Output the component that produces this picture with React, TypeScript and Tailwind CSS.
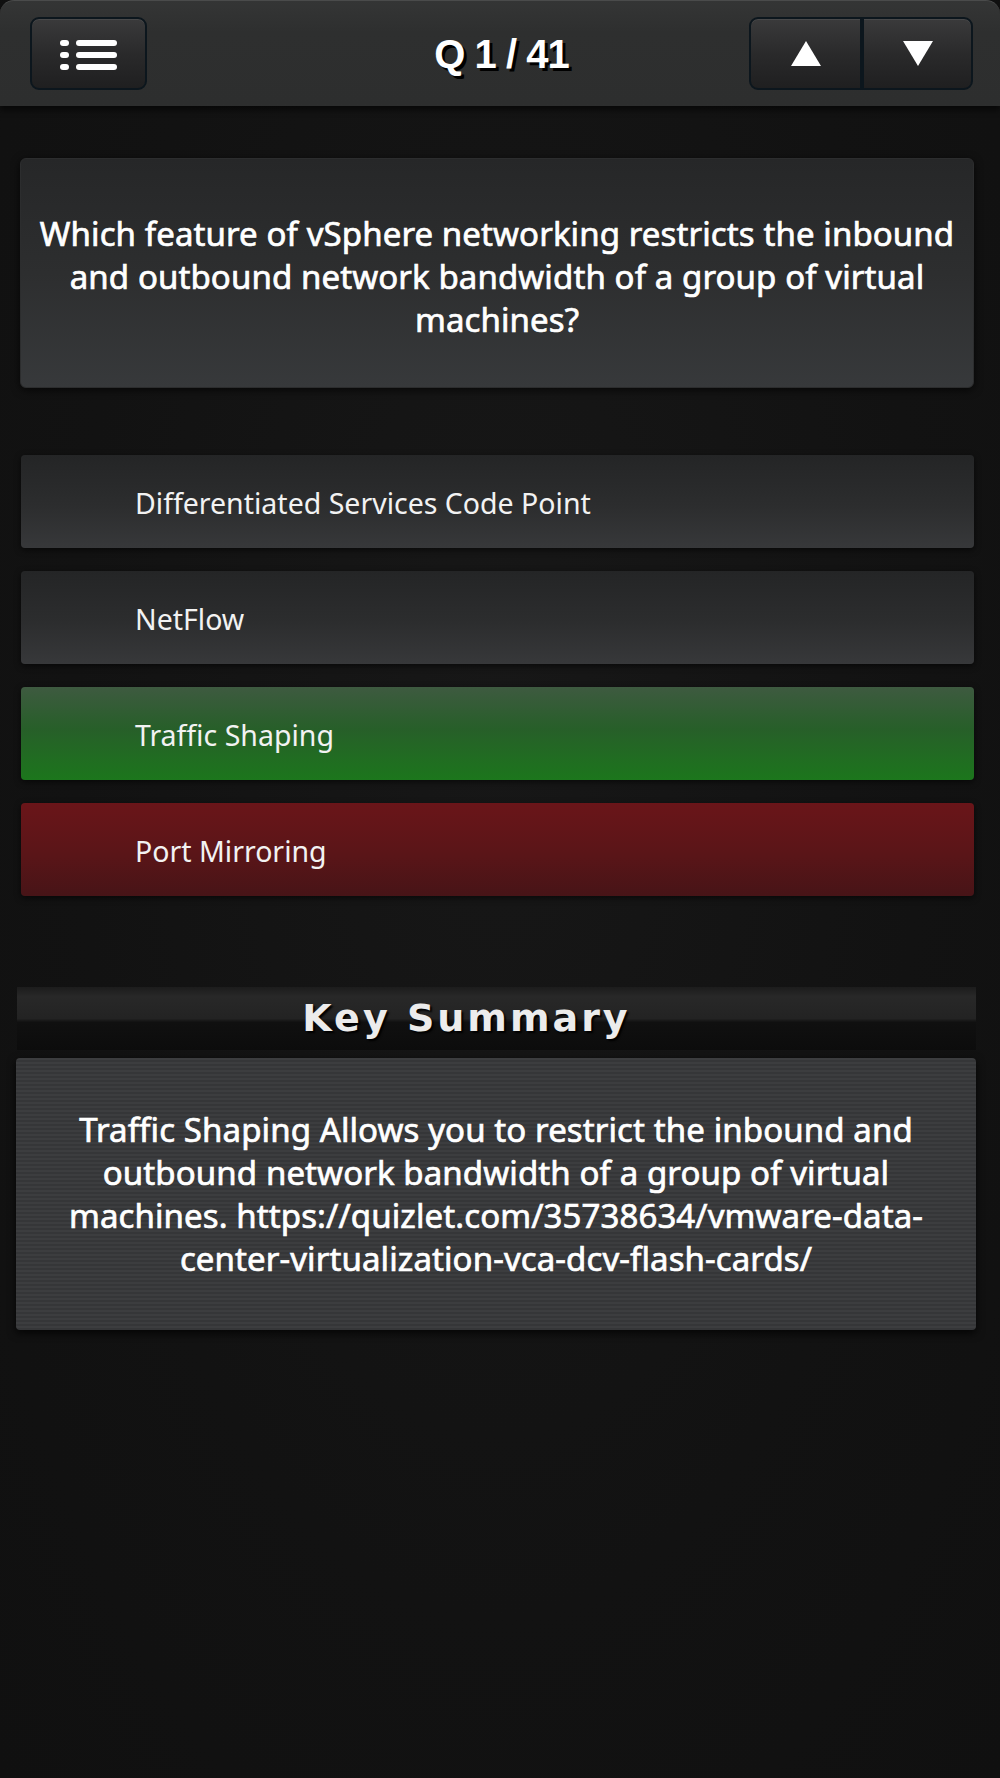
import React from "react";

const options = [
  { label: "Differentiated Services Code Point", state: "idle" },
  { label: "NetFlow", state: "idle" },
  { label: "Traffic Shaping", state: "correct" },
  { label: "Port Mirroring", state: "wrong" },
];

const optionBg: Record<string, string> = {
  idle: "bg-[linear-gradient(180deg,#242526_0%,#2c2d2e_55%,#37383a_100%)]",
  correct: "bg-[linear-gradient(180deg,#3e5a40_0%,#275f29_45%,#1c761c_100%)]",
  wrong: "bg-[linear-gradient(180deg,#6a1519_0%,#5a1518_55%,#471417_100%)]",
};

function NavButton({ dir, className }: { dir: "up" | "down"; className: string }) {
  return (
    <button
      className={`flex h-[73px] items-center justify-center border-2 border-[#0c161d] bg-[linear-gradient(180deg,#3a3a3b_0%,#2a2a2b_50%,#1f1f20_100%)] shadow-[inset_0_1px_0_rgba(255,255,255,0.08)] ${className}`}
    >
      <svg width="32" height="27" viewBox="0 0 32 27">
        {dir === "up" ? (
          <polygon points="16,1 31,26 1,26" fill="#fff" />
        ) : (
          <polygon points="1,1 31,1 16,26" fill="#fff" />
        )}
      </svg>
    </button>
  );
}

export default function App() {
  return (
    <div className="min-h-[1778px] w-full bg-[radial-gradient(ellipse_at_50%_40%,#171717_0%,#121212_60%,#101010_100%)] font-['Noto_Sans',sans-serif]">
      <header className="grid h-[106px] grid-cols-3 items-center rounded-t-[14px] border-t border-[#4a4b4b] bg-[linear-gradient(180deg,#343535_0%,#2e2f2f_30%,#2d2e2e_100%)] pl-[30px] pr-[27px] shadow-[0_4px_6px_rgba(0,0,0,0.6)]">
        <button className="flex h-[73px] w-[117px] flex-col items-center justify-center gap-[6px] rounded-[9px] border-2 border-[#0c161d] bg-[linear-gradient(180deg,#3a3a3b_0%,#2a2a2b_50%,#1f1f20_100%)] pt-[3px] shadow-[inset_0_1px_0_rgba(255,255,255,0.08)]">
          {[0, 1, 2].map((i) => (
            <span key={i} className="flex items-center gap-[7px]">
              <span className="h-[6px] w-[9px] rounded-full bg-white" />
              <span className="h-[6px] w-[41px] rounded-full bg-white" />
            </span>
          ))}
        </button>
        <div className="text-center font-['Liberation_Sans',sans-serif] text-[40px] font-bold tracking-[-1px] text-white [text-shadow:3px_3px_0_#000]">
          Q 1 / 41
        </div>
        <div className="flex justify-end">
          <NavButton dir="up" className="w-[113px] rounded-l-[9px]" />
          <NavButton dir="down" className="w-[111px] rounded-r-[9px]" />
        </div>
      </header>

      <main className="pl-[20px] pr-[26px]">
        <section className="mt-[52px] flex h-[230px] items-center justify-center rounded-[6px] border border-[#2c2d2e] bg-[linear-gradient(180deg,#262728_0%,#2d2e2f_50%,#37393b_100%)] px-[14px] pt-[6px] shadow-[0_2px_8px_rgba(0,0,0,0.7)]">
          <p className="text-center text-[33px] leading-[43px] tracking-[0.1px] text-white [-webkit-text-stroke:0.7px_#fff]">
            Which feature of vSphere networking restricts the inbound and outbound network bandwidth of a group of virtual
            machines?
          </p>
        </section>

        <ul className="mt-[67px] flex flex-col gap-[23px] pl-[1px]">
          {options.map((o) => (
            <li
              key={o.label}
              className={`flex h-[93px] items-center rounded-[4px] pl-[114px] pt-[4px] text-[28.5px] text-[#f2f2f2] shadow-[0_2px_6px_rgba(0,0,0,0.6)] ${optionBg[o.state]}`}
            >
              {o.label}
            </li>
          ))}
        </ul>
      </main>

      <section className="ml-[17px] mr-[24px] mt-[91px]">
        <div className="flex h-[63px] items-center justify-center bg-[linear-gradient(180deg,#1c1c1c_0%,#282828_15%,#232323_50%,#101010_56%,#0c0c0c_100%)] pr-[60px]">
          <h2 className="font-['DejaVu_Sans',sans-serif] text-[38px] font-bold tracking-[3px] text-[#ececec] [text-shadow:2px_2px_2px_#000]">
            Key Summary
          </h2>
        </div>
        <div className="-ml-[1px] mt-[8px] flex h-[272px] items-center justify-center rounded-[4px] bg-[#3a3b3d] bg-[repeating-linear-gradient(180deg,#3c3d3f_0px,#3c3d3f_2px,#353638_2px,#353638_4px)] px-[36px] shadow-[0_3px_8px_rgba(0,0,0,0.8)]">
          <p className="text-center text-[33px] leading-[43px] tracking-[0.1px] text-white [-webkit-text-stroke:0.7px_#fff]">
            Traffic Shaping Allows you to restrict the inbound and outbound network bandwidth of a group of virtual machines.
            https://quizlet.com/35738634/vmware-data-center-virtualization-vca-dcv-flash-cards/
          </p>
        </div>
      </section>
    </div>
  );
}
